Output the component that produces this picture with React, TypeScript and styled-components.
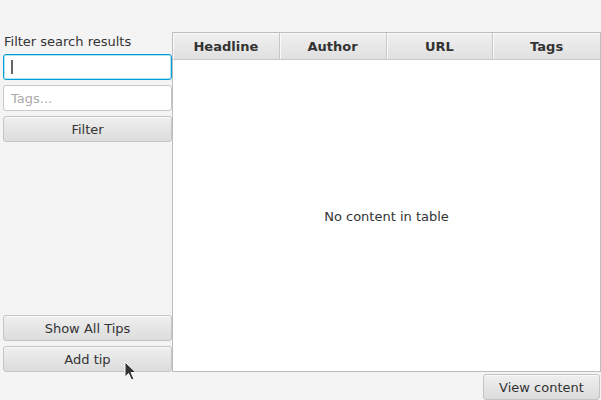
import React from "react";
import styled, { createGlobalStyle } from "styled-components";

const Global = createGlobalStyle`
  html, body { margin: 0; padding: 0; background: #f4f4f4; }
  body { font-family: "DejaVu Sans", sans-serif; font-size: 13px; color: #333; }
`;

const Page = styled.div`
  width: 601px;
  height: 400px;
  display: flex;
  flex-direction: column;
  background: #f4f4f4;
  position: relative;
  overflow: hidden;
`;

const Main = styled.div`
  display: flex;
  margin-top: 32px;
  height: 340px;
`;

const Side = styled.div`
  width: 169px;
  padding: 0 0 0 3px;
  display: flex;
  flex-direction: column;
`;

const Label = styled.div`
  height: 18px;
  line-height: 18px;
  margin: 1px 0 3px 1px;
  white-space: nowrap;
`;

const Field = styled.div<{ $focused?: boolean }>`
  box-sizing: border-box;
  height: 26px;
  margin-bottom: 5px;
  background: #fff;
  border-radius: 3px;
  border: 1px solid ${(p) => (p.$focused ? "#039ed3" : "#c8c8c8")};
  box-shadow: ${(p) => (p.$focused ? "inset 0 0 0 1px #b6e3f4" : "none")};
  padding-left: 7px;
  display: flex;
  align-items: center;
  color: #aaa;
`;

const Caret = styled.span`
  width: 2px;
  height: 14px;
  background: #666;
`;

const Button = styled.button<{ $width?: number }>`
  box-sizing: border-box;
  height: 26px;
  width: ${(p) => (p.$width ? `${p.$width}px` : "100%")};
  border: 1px solid #c4c4c4;
  border-radius: 3px;
  background: linear-gradient(#efefef, #dcdcdc);
  box-shadow: inset 0 1px 0 #fafafa;
  font-family: "DejaVu Sans", sans-serif;
  font-size: 13px;
  color: #333;
  padding: 0;
  margin: 0;
`;

const Spacer = styled.div`
  flex: 1;
`;

const SideBottom = styled.div`
  display: flex;
  flex-direction: column;
  gap: 5px;
`;

const Table = styled.div`
  flex: 1;
  box-sizing: border-box;
  border: 1px solid #bdbdbd;
  background: #fff;
  display: flex;
  flex-direction: column;
`;

const Header = styled.div`
  display: grid;
  grid-template-columns: repeat(4, 1fr);
  height: 26px;
  background: linear-gradient(#f0f0f0, #e0e0e0);
  border-bottom: 1px solid #c8c8c8;
`;

const HeadCell = styled.div<{ $last?: boolean }>`
  border-right: ${(p) => (p.$last ? "none" : "1px solid #c8c8c8")};
  box-shadow: inset 1px 1px 0 #fafafa;
  display: flex;
  align-items: center;
  justify-content: center;
  font-weight: bold;
  color: #333;
`;

const Body = styled.div`
  flex: 1;
  display: flex;
  align-items: center;
  justify-content: center;
  color: #333;
  padding-top: 1px;
`;

const Bottom = styled.div`
  display: flex;
  justify-content: flex-end;
  padding: 2px 1px 0 0;
`;

const Cursor = styled.svg`
  position: absolute;
  left: 124px;
  top: 361px;
`;

export default function App() {
  return (
    <Page>
      <Global />
      <Main>
        <Side>
          <Label>Filter search results</Label>
          <Field $focused>
            <Caret />
          </Field>
          <Field>Tags...</Field>
          <Button>Filter</Button>
          <Spacer />
          <SideBottom>
            <Button>Show All Tips</Button>
            <Button>Add tip</Button>
          </SideBottom>
        </Side>
        <Table>
          <Header>
            <HeadCell>Headline</HeadCell>
            <HeadCell>Author</HeadCell>
            <HeadCell>URL</HeadCell>
            <HeadCell $last>Tags</HeadCell>
          </Header>
          <Body>No content in table</Body>
        </Table>
      </Main>
      <Bottom>
        <Button $width={117}>View content</Button>
      </Bottom>
      <Cursor width="14" height="22" viewBox="0 0 14 22">
        <path d="M1 1 L1 16 L4.5 12.5 L7.5 19 L10 18 L7 11.5 L12 11.5 Z" fill="#333" stroke="#fff" strokeWidth="1" />
      </Cursor>
    </Page>
  );
}
